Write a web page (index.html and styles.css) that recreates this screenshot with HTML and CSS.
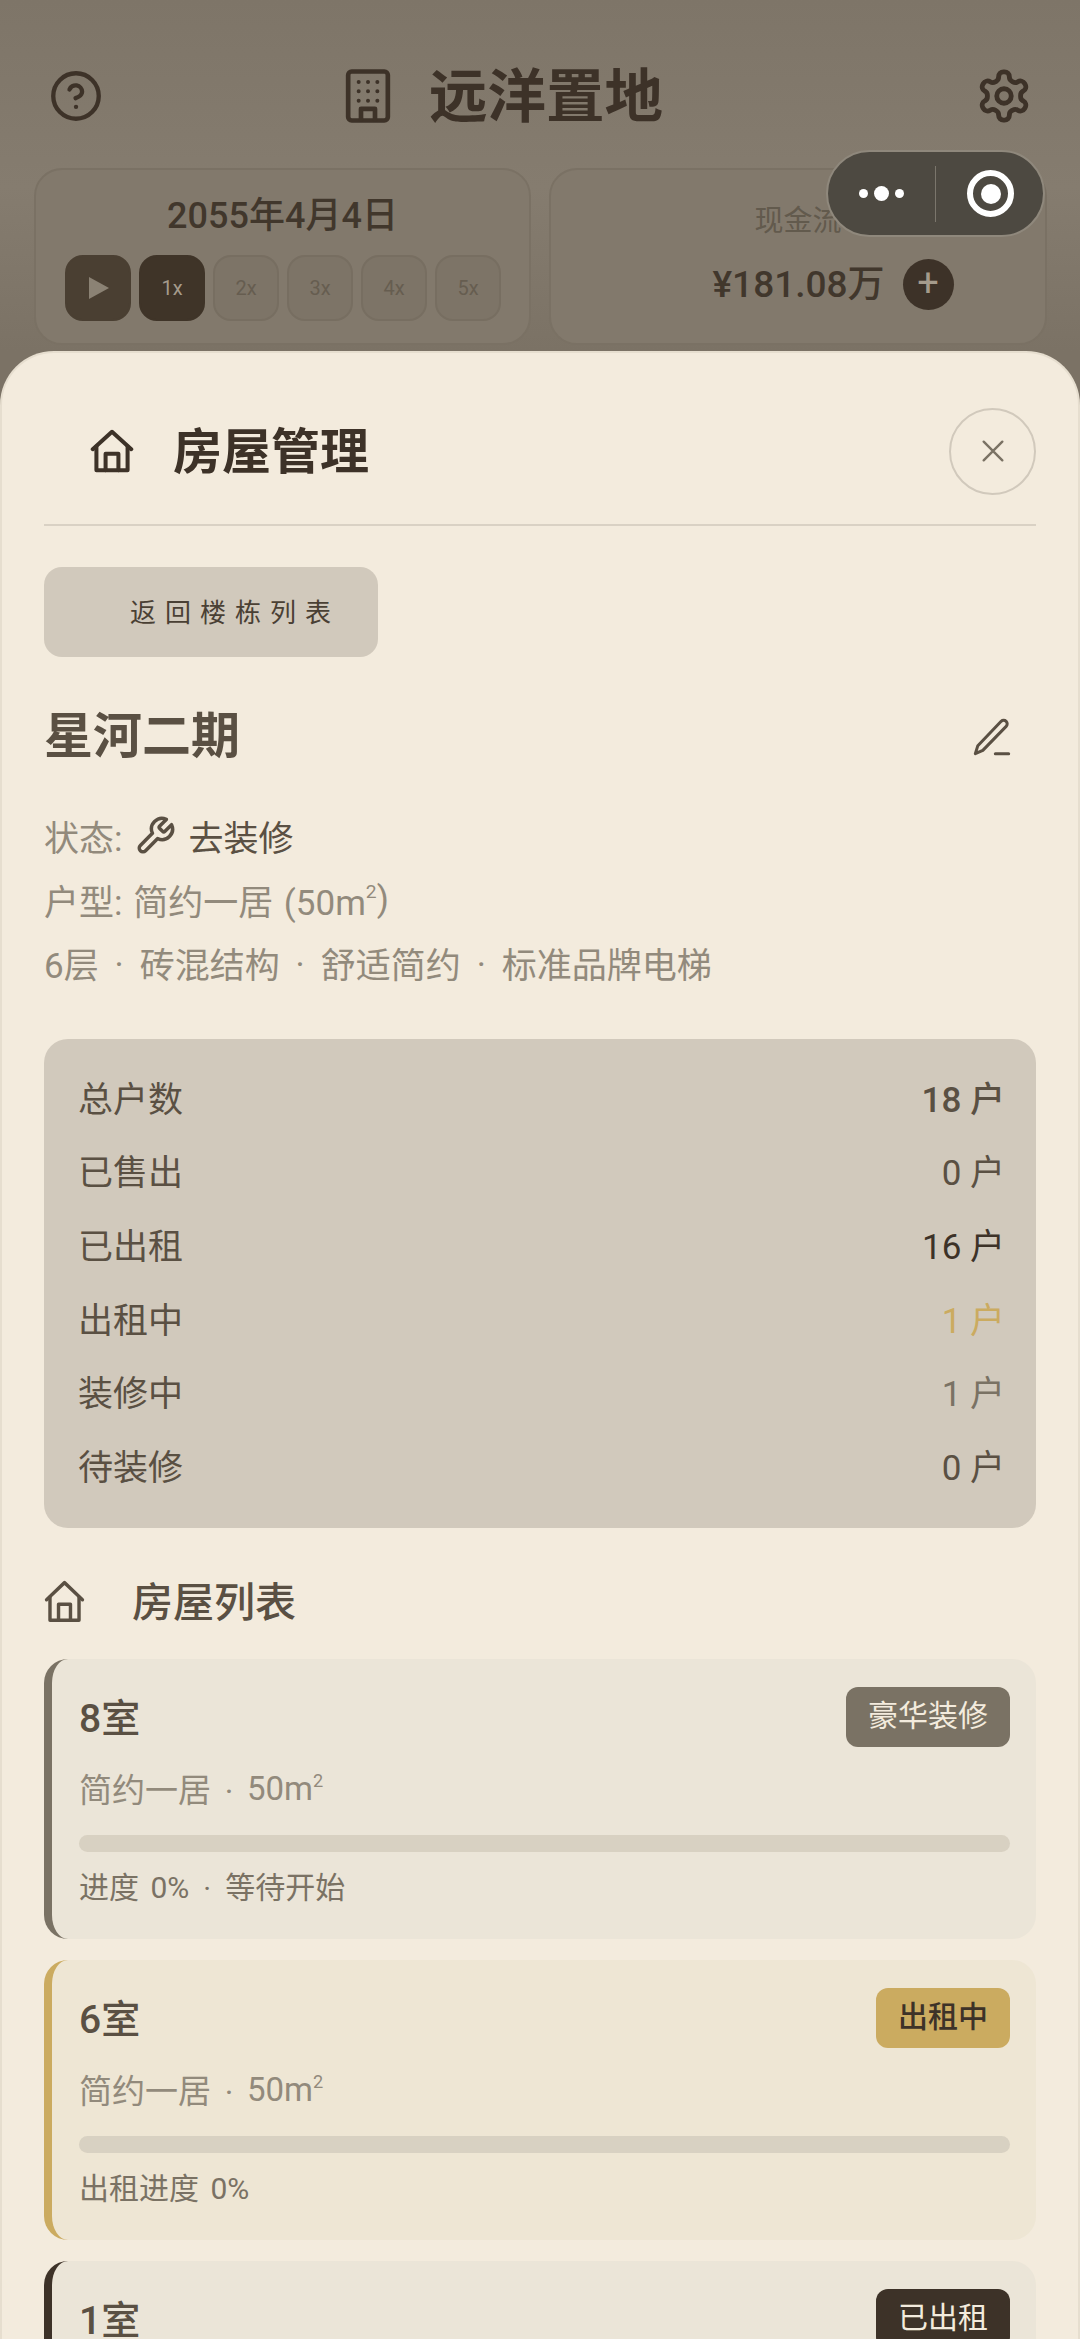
FILE: index.html
```html
<!DOCTYPE html>
<html lang="zh">
<head>
  <meta charset="UTF-8">
  <title>远洋置地</title>
  <link rel="stylesheet" href="styles.css">
</head>
<body>
  <div class="game">
    <div class="topbar">
      <svg class="icon help" viewBox="0 0 24 24"><circle cx="12" cy="12" r="10.5"/><path d="M9 9a3 3 0 0 1 5.8 1c0 2-3 3-3 3"/><path d="M12 17h.01"/></svg>
      <div class="brand">
        <svg class="icon building" viewBox="0 0 24 24"><rect x="3.5" y="1.5" width="17" height="21" rx="1.5"/><path d="M9 22v-4.500h6v4.500"/><path class="dots" d="M8 6h.01M12 6h.01M16 6h.01M8 10h.01M12 10h.01M16 10h.01M8 14h.01M12 14h.01M16 14h.01"/></svg>
        <span class="brand-name">远洋置地</span>
      </div>
      <svg class="icon gear" viewBox="0 0 24 24"><path d="M12.220 2h-.44a2 2 0 0 0-2 2v.18a2 2 0 0 1-1 1.730l-.43.25a2 2 0 0 1-2 0l-.15-.08a2 2 0 0 0-2.730.73l-.22.38a2 2 0 0 0 .73 2.730l.15.1a2 2 0 0 1 1 1.720v.51a2 2 0 0 1-1 1.740l-.15.09a2 2 0 0 0-.73 2.730l.22.38a2 2 0 0 0 2.730.73l.15-.08a2 2 0 0 1 2 0l.43.25a2 2 0 0 1 1 1.730V20a2 2 0 0 0 2 2h.44a2 2 0 0 0 2-2v-.18a2 2 0 0 1 1-1.730l.43-.25a2 2 0 0 1 2 0l.15.08a2 2 0 0 0 2.730-.73l.22-.39a2 2 0 0 0-.73-2.730l-.15-.08a2 2 0 0 1-1-1.740v-.5a2 2 0 0 1 1-1.740l.15-.09a2 2 0 0 0 .73-2.730l-.22-.38a2 2 0 0 0-2.730-.73l-.15.08a2 2 0 0 1-2 0l-.43-.25a2 2 0 0 1-1-1.730V4a2 2 0 0 0-2-2z"/><circle cx="12" cy="12" r="3"/></svg>
    </div>

    <div class="panels">
      <div class="panel">
        <div class="date">2055年4月4日</div>
        <div class="speeds">
          <div class="speed on play"><svg viewBox="0 0 24 24"><path d="M3 1l20 11L3 23z"/></svg></div>
          <div class="speed on">1x</div>
          <div class="speed">2x</div>
          <div class="speed">3x</div>
          <div class="speed">4x</div>
          <div class="speed">5x</div>
        </div>
      </div>
      <div class="panel cash">
        <div class="cash-label">现金流</div>
        <div class="cash-row">
          <span class="cash-value">¥181.08万</span>
          <span class="cash-add">+</span>
        </div>
      </div>
    </div>
  </div>

  <div class="capsule">
    <div class="capsule-dots"><i></i><i class="big"></i><i></i></div>
    <div class="capsule-line"></div>
    <div class="capsule-ring"><i></i></div>
  </div>

  <div class="sheet">
    <div class="sheet-head">
      <svg class="icon home" viewBox="0 0 24 24"><path d="M1.500 11L12 1.500 22.500 11"/><path d="M3.500 9.500V22.500h17V9.500"/><path d="M8.500 22.500v-9h7v9"/></svg>
      <h2 class="sheet-title">房屋管理</h2>
      <div class="close"><svg class="icon" viewBox="0 0 24 24"><path d="M5 5l14 14M19 5L5 19"/></svg></div>
    </div>

    <div class="back">返回楼栋列表</div>

    <div class="name-row">
      <span class="name">星河二期</span>
      <svg class="icon edit" viewBox="0 0 24 24"><path d="M14 22h8"/><path d="M17.500 2.600a2.100 2.100 0 0 1 3 3L6.500 20 2 22l1.500-4.800z"/></svg>
    </div>

    <div class="meta">
      <div class="meta-line">状态:<svg class="icon wrench" viewBox="0 0 24 24"><path d="M14.700 6.300a1 1 0 0 0 0 1.400l1.600 1.600a1 1 0 0 0 1.400 0l3.770-3.770a6 6 0 0 1-7.940 7.940l-6.910 6.910a2.120 2.120 0 0 1-3-3l6.910-6.910a6 6 0 0 1 7.940-7.940l-3.760 3.760z"/></svg><span class="meta-action">去装修</span></div>
      <div class="meta-line">户型: 简约一居 (50m<span class="sq">2</span>)</div>
      <div class="meta-line">6层<span class="sep">·</span>砖混结构<span class="sep">·</span>舒适简约<span class="sep">·</span>标准品牌电梯</div>
    </div>

    <div class="stats">
      <div class="stat"><span>总户数</span><b class="total">18 户</b></div>
      <div class="stat"><span>已售出</span><b>0 户</b></div>
      <div class="stat"><span>已出租</span><b class="rented">16 户</b></div>
      <div class="stat"><span>出租中</span><b class="renting">1 户</b></div>
      <div class="stat"><span>装修中</span><b class="fixing">1 户</b></div>
      <div class="stat"><span>待装修</span><b>0 户</b></div>
    </div>

    <div class="list-head">
      <svg class="icon home-sm" viewBox="0 0 24 24" preserveAspectRatio="none"><path d="M1.500 11L12 1.500 22.500 11"/><path d="M3.500 9.500V22.500h17V9.500"/><path d="M8.500 22.500v-9h7v9"/></svg>
      <span>房屋列表</span>
    </div>

    <div class="room grey">
      <div class="room-top"><span class="room-no">8室</span><span class="tag">豪华装修</span></div>
      <div class="room-type">简约一居<span class="sep">·</span>50m<span class="sq">2</span></div>
      <div class="bar"></div>
      <div class="room-note">进度 0%<span class="sep">·</span>等待开始</div>
    </div>

    <div class="room gold">
      <div class="room-top"><span class="room-no">6室</span><span class="tag">出租中</span></div>
      <div class="room-type">简约一居<span class="sep">·</span>50m<span class="sq">2</span></div>
      <div class="bar"></div>
      <div class="room-note">出租进度 0%</div>
    </div>

    <div class="room dark">
      <div class="room-top"><span class="room-no">1室</span><span class="tag">已出租</span></div>
    </div>
  </div>
</body>
</html>
```

FILE: styles.css
```css
* {
  box-sizing: border-box;
}
html, body {
  margin: 0;
  height: 2339px;
  overflow: hidden;
}
body {
  position: relative;
  font-family: Roboto, "Noto Sans CJK SC", sans-serif;
  background: linear-gradient(#7e7568, #857c6f 8%, #7b7265 15%);
  color: #3d3228;
}
.icon {
  fill: none;
  stroke: currentColor;
  stroke-width: 2;
  stroke-linecap: round;
  stroke-linejoin: round;
  flex: none;
  display: block;
}

/* dimmed game screen */
.game {
  padding: 69px 34px 0;
}
.topbar {
  height: 54px;
  display: flex;
  align-items: center;
  justify-content: space-between;
  padding: 0 13px 0 16px;
}
.help {
  width: 52px;
  height: 52px;
}
.gear {
  width: 58px;
  height: 58px;
}
.brand {
  display: flex;
  align-items: center;
  gap: 33px;
  margin-right: 74px;
}
.building {
  width: 56px;
  height: 56px;
}
.building .dots {
  stroke-width: 1.700;
}
.brand-name {
  margin-top: 2px;
  font-size: 58.500px;
  line-height: 54px;
  font-weight: 700;
}
.panels {
  margin-top: 45px;
  display: grid;
  grid-template-columns: 497px 498px;
  gap: 18px;
}
.panel {
  height: 177px;
  border: 2px solid #7a7164;
  border-radius: 28px;
  background: #82796c;
}
.date {
  margin-top: 25px;
  font-size: 36px;
  line-height: 42px;
  font-weight: 500;
  text-align: center;
  color: #41372c;
}
.speeds {
  margin: 18px 0 0 29px;
  display: flex;
  gap: 8px;
}
.speed {
  width: 66px;
  height: 66px;
  border-radius: 18px;
  border: 2px solid #776e61;
  background: #7d7467;
  color: #665d50;
  font-size: 20px;
  display: flex;
  align-items: center;
  justify-content: center;
}
.speed.on {
  background: #3f3428;
  border-color: #3f3428;
  color: #a59b8c;
}
.speed.play {
  background: #4a3f32;
  border-color: #4a3f32;
}
.speed svg {
  width: 24px;
  height: 24px;
  fill: #8b8274;
}
.cash {
  text-align: center;
}
.cash-label {
  margin-top: 31px;
  font-size: 29px;
  line-height: 40px;
  color: #625a4d;
  text-align: center;
}
.cash-row {
  margin-top: 18px;
  display: flex;
  align-items: center;
  justify-content: center;
  gap: 18px;
  padding-left: 70px;
}
.cash-value {
  font-size: 37px;
  line-height: 50px;
  font-weight: 500;
  color: #41372c;
}
.cash-add {
  width: 51px;
  height: 51px;
  border-radius: 50%;
  background: #3d3228;
  color: #a59b8c;
  font-size: 38px;
  line-height: 48px;
  text-align: center;
}

/* wechat capsule */
.capsule {
  position: absolute;
  left: 826px;
  top: 150px;
  width: 219px;
  height: 87px;
  border-radius: 44px;
  border: 2px solid #8f887c;
  background: #4d4941;
  display: flex;
  align-items: center;
}
.capsule-dots {
  width: 107px;
  display: flex;
  align-items: center;
  justify-content: center;
  gap: 6px;
}
.capsule-dots i {
  width: 9px;
  height: 9px;
  border-radius: 50%;
  background: #fff;
}
.capsule-dots i.big {
  width: 15px;
  height: 15px;
}
.capsule-line {
  width: 1px;
  height: 56px;
  background: #7b766c;
}
.capsule-ring {
  margin-left: 31px;
  width: 47px;
  height: 47px;
  border-radius: 50%;
  border: 6px solid #fff;
  display: flex;
  align-items: center;
  justify-content: center;
}
.capsule-ring i {
  width: 20px;
  height: 20px;
  border-radius: 50%;
  background: #fff;
}

/* bottom sheet */
.sheet {
  position: absolute;
  left: 0;
  right: 0;
  top: 351px;
  bottom: 0;
  overflow: hidden;
  padding: 0 42px;
  background: #f3ebdd;
  border: 2px solid #e6decf;
  border-bottom: 0;
  border-radius: 54px 54px 0 0;
}
.sheet-head {
  height: 173px;
  padding: 25px 0 0 46px;
  display: flex;
  align-items: center;
  border-bottom: 2px solid #d9d1c4;
}
.home {
  width: 44px;
  height: 44px;
  stroke-width: 2.200;
}
.sheet-title {
  margin: 3px 0 0 39px;
  flex: 1;
  font-size: 49px;
  line-height: 60px;
  font-weight: 700;
}
.close {
  width: 87px;
  height: 87px;
  border-radius: 50%;
  border: 2px solid #d1c9bc;
  color: #7a7264;
  display: flex;
  align-items: center;
  justify-content: center;
}
.close svg {
  width: 32px;
  height: 32px;
  stroke-width: 1.800;
}
.back {
  margin-top: 41px;
  width: 334px;
  height: 90px;
  padding-left: 86px;
  border-radius: 18px;
  background: #d1c9bc;
  font-size: 26px;
  line-height: 92px;
  letter-spacing: 9px;
  color: #4a4034;
}
.name-row {
  margin-top: 43px;
  height: 70px;
  padding-right: 24px;
  display: flex;
  align-items: center;
  justify-content: space-between;
  color: #5a5043;
}
.name {
  margin-top: 3px;
  font-size: 49px;
  line-height: 70px;
  font-weight: 700;
}
.edit {
  width: 40px;
  height: 40px;
  margin-top: 4px;
  stroke-width: 1.800;
}
.meta {
  margin-top: 36px;
}
.meta-line {
  height: 63.500px;
  padding-bottom: 4px;
  display: flex;
  align-items: center;
  font-size: 35px;
  white-space: pre;
  word-spacing: 2px;
  color: #928a7c;
}
.sep {
  width: 41px;
  margin-top: 6px;
  text-align: center;
}
.sq {
  font-size: 0.55em;
  margin-bottom: 0.8em;
}
.wrench {
  width: 42px;
  height: 42px;
  margin: 0 12px;
  color: #5a5043;
}
.meta-action {
  color: #5a5043;
}
.stats {
  margin-top: 42px;
  padding: 23px 31px 25px 34px;
  border-radius: 24px;
  background: #d1c9bc;
}
.stat {
  height: 73.600px;
  padding-bottom: 4px;
  display: flex;
  align-items: center;
  justify-content: space-between;
  font-size: 35px;
  color: #5a5043;
}
.stat b {
  font-weight: 400;
}
.stat .total {
  font-weight: 500;
}
.stat .rented {
  color: #3d3228;
}
.stat .renting {
  color: #cbab60;
}
.stat .fixing {
  color: #7a7264;
}
.list-head {
  margin-top: 47px;
  height: 52px;
  display: flex;
  align-items: center;
  gap: 47px;
  font-size: 41px;
  font-weight: 500;
  color: #5a5043;
}
.list-head span {
  margin-bottom: 5px;
}
.home-sm {
  width: 41px;
  height: 43px;
}
.room {
  margin-top: 21px;
  padding: 28px 26px 32px 27px;
  border-left: 8px solid #7a7264;
  border-radius: 24px;
  background: #ebe5d8;
}
.list-head + .room {
  margin-top: 32px;
}
.room.gold {
  border-left-color: #cbab60;
  background: #eee6d4;
}
.room.dark {
  border-left-color: #3d3228;
}
.room-top {
  height: 60px;
  display: flex;
  align-items: center;
  justify-content: space-between;
}
.room-no {
  margin-bottom: 4px;
  font-size: 39px;
  font-weight: 500;
  color: #5a5043;
}
.tag {
  height: 60px;
  padding: 0 22px;
  border-radius: 12px;
  background: #7a7264;
  color: #f3ebdd;
  font-size: 30px;
  line-height: 58px;
}
.gold .tag {
  background: #cbab60;
  color: #3d3228;
  font-weight: 500;
}
.dark .tag {
  background: #3d3228;
}
.room-type {
  margin-top: 19px;
  display: flex;
  align-items: center;
  height: 44px;
  font-size: 33px;
  color: #928a7c;
}
.room-type .sep {
  width: 36px;
}
.bar {
  margin-top: 25px;
  height: 17px;
  border-radius: 9px;
  background: #d8d1c2;
}
.room-note {
  margin-top: 11px;
  display: flex;
  align-items: center;
  height: 44px;
  font-size: 30px;
  white-space: pre;
  word-spacing: 4px;
  color: #7a7264;
}
.room-note .sep {
  width: 36px;
}
```
